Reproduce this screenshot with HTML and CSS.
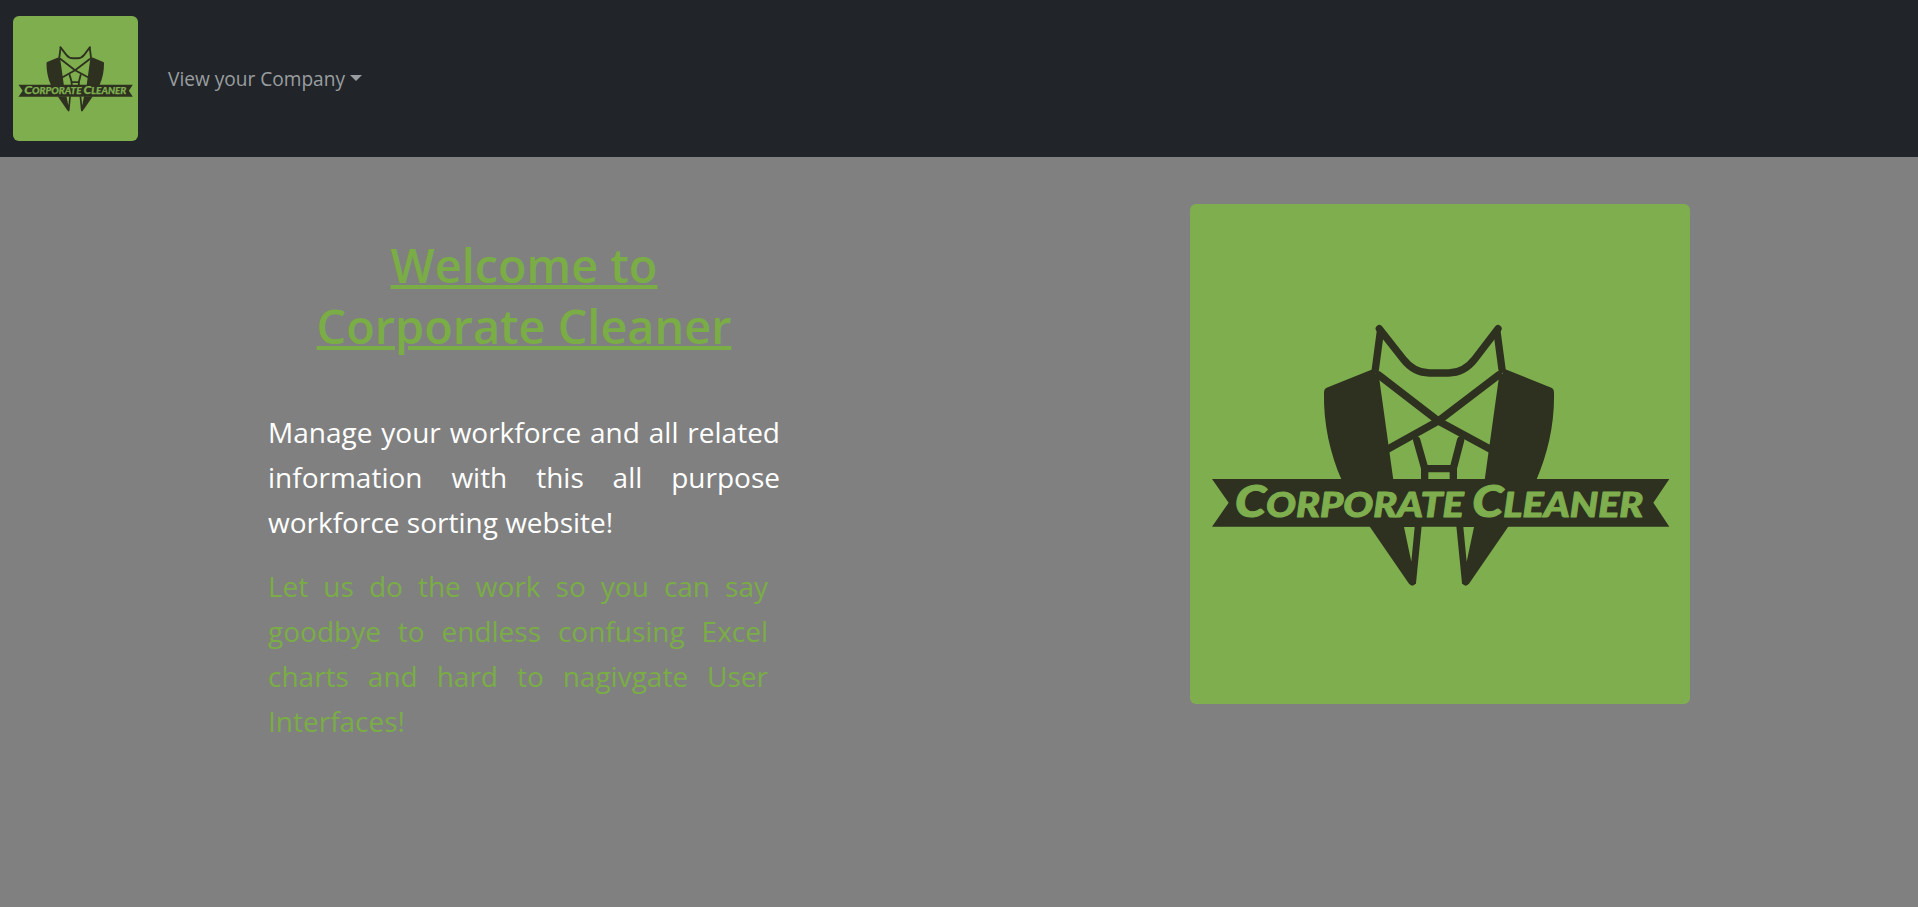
FILE: index.html
```html
<!DOCTYPE html>
<html lang="en">
<head>
<meta charset="utf-8">
<title>Corporate Cleaner</title>
<link rel="stylesheet" href="styles.css">
</head>
<body>
<nav class="navbar">
  <a class="brand" href="#">
    <svg class="brand-logo" viewBox="0 0 1500 1500" role="img" aria-label="Corporate Cleaner logo">
      <rect class="logo-bg" width="1500" height="1500"/>
      <g transform="translate(-30 288)">
        <g class="logo-dark">
          <path d="M578 208 L440 263 Q432 266 432 278 C430 370 450 460 485 540 L640 540 L598 238 Z"/>
          <path d="M976 208 L1114 263 Q1122 266 1122 278 C1124 370 1104 460 1069 540 L914 540 L956 238 Z"/>
          <path d="M96 537 H1468 L1420 608 L1468 680 H96 L146 608 Z"/>
          <path d="M568 678 L686 850 Q697 864 708 850 L725 678 Z"/>
          <path d="M986 678 L868 850 Q857 864 846 850 L829 678 Z"/>
        </g>
        <g class="logo-green">
          <path d="M672 681 H704 L694 785 Z"/>
          <path d="M882 681 H850 L860 785 Z"/>
        </g>
        <g class="logo-line">
          <path d="M598 86 L670 178 Q702 219 748 219 H806 Q852 219 884 178 L954 86"/>
          <path d="M601 95 L586 208"/>
          <path d="M951 95 L966 208"/>
          <path d="M596 225 L775 363 L930 447"/>
          <path d="M956 225 L775 363 L624 447"/>
          <path d="M710 420 L734 505 V535"/>
          <path d="M842 420 L820 505 V535"/>
          <path d="M734 506 H820"/>
        </g>
        <text class="logo-text" x="165" y="652" textLength="1225" lengthAdjust="spacingAndGlyphs"><tspan class="logo-cap">C</tspan>orporate <tspan class="logo-cap">C</tspan>leaner</text>
      </g>
    </svg>
  </a>
  <a class="nav-link" href="#">View your Company<span class="caret"></span></a>
</nav>

<main class="hero">
  <section class="intro">
    <h1 class="title">Welcome to<br>Corporate Cleaner</h1>
    <p class="lead">Manage your workforce and all related information with this all purpose workforce sorting website!</p>
    <p class="pitch">Let us do the work so you can say goodbye to endless confusing Excel charts and hard to nagivgate User Interfaces!</p>
  </section>
  <svg class="hero-logo" viewBox="0 0 1500 1500" role="img" aria-label="Corporate Cleaner logo">
    <rect class="logo-bg" width="1500" height="1500"/>
    <g transform="translate(-30 288)">
      <g class="logo-dark">
        <path d="M578 208 L440 263 Q432 266 432 278 C430 370 450 460 485 540 L640 540 L598 238 Z"/>
        <path d="M976 208 L1114 263 Q1122 266 1122 278 C1124 370 1104 460 1069 540 L914 540 L956 238 Z"/>
        <path d="M96 537 H1468 L1420 608 L1468 680 H96 L146 608 Z"/>
        <path d="M568 678 L686 850 Q697 864 708 850 L725 678 Z"/>
        <path d="M986 678 L868 850 Q857 864 846 850 L829 678 Z"/>
      </g>
      <g class="logo-green">
        <path d="M672 681 H704 L694 785 Z"/>
        <path d="M882 681 H850 L860 785 Z"/>
      </g>
      <g class="logo-line">
        <path d="M598 86 L670 178 Q702 219 748 219 H806 Q852 219 884 178 L954 86"/>
        <path d="M601 95 L586 208"/>
        <path d="M951 95 L966 208"/>
        <path d="M596 225 L775 363 L930 447"/>
        <path d="M956 225 L775 363 L624 447"/>
        <path d="M710 420 L734 505 V535"/>
        <path d="M842 420 L820 505 V535"/>
        <path d="M734 506 H820"/>
      </g>
      <text class="logo-text" x="165" y="652" textLength="1225" lengthAdjust="spacingAndGlyphs"><tspan class="logo-cap">C</tspan>orporate <tspan class="logo-cap">C</tspan>leaner</text>
    </g>
  </svg>
</main>
</body>
</html>
```

FILE: styles.css
```css
* { box-sizing: border-box; }
html, body { margin: 0; height: 100%; }
body {
  background: #808080;
  font-family: "Open Sans", "Noto Sans", sans-serif;
}
.logo-bg, .logo-green { fill: #7fae4e; }
.logo-dark { fill: #2e3120; }
.logo-line {
  fill: none;
  stroke: #2e3120;
  stroke-width: 22;
  stroke-linecap: round;
  stroke-linejoin: round;
}
.logo-text {
  font-family: "Lato", sans-serif;
  font-weight: 900;
  font-style: italic;
  font-size: 104px;
  text-transform: uppercase;
  fill: #7fae4e;
  stroke: #7fae4e;
  stroke-width: 3;
  stroke-linejoin: round;
}
.logo-cap { font-size: 132px; }
.navbar {
  height: 157px;
  background: #212529;
  display: flex;
  align-items: center;
  padding: 0 13px;
}
.brand { display: block; line-height: 0; }
.brand-logo { width: 125px; height: 125px; border-radius: 6px; display: block; }
.nav-link {
  margin-left: 30px;
  font-size: 19.1px;
  color: #9a9da0;
  text-decoration: none;
  display: flex;
  align-items: center;
}
.caret {
  margin-left: 5px;
  margin-top: -2px;
  border-top: 6px solid #9a9da0;
  border-left: 6px solid transparent;
  border-right: 6px solid transparent;
}
.hero {
  display: flex;
  align-items: flex-start;
  padding: 47px 0 0 268px;
}
.intro { width: 512px; margin-right: 410px; }
.title {
  margin: 0 0 53px;
  padding-top: 31px;
  font-size: 46.8px;
  line-height: 61px;
  font-weight: 600;
  text-align: center;
  color: #7aad45;
  text-decoration: underline;
  text-decoration-thickness: 4px;
}
.lead {
  margin: 0 0 19px;
  font-size: 28px;
  line-height: 45px;
  color: #fff;
  text-align: justify;
}
.pitch {
  margin: 0;
  width: 500px;
  font-size: 28px;
  line-height: 45px;
  color: #7aad45;
  text-align: justify;
}
.hero-logo { width: 500px; height: 500px; border-radius: 6px; display: block; flex: none; }
```
